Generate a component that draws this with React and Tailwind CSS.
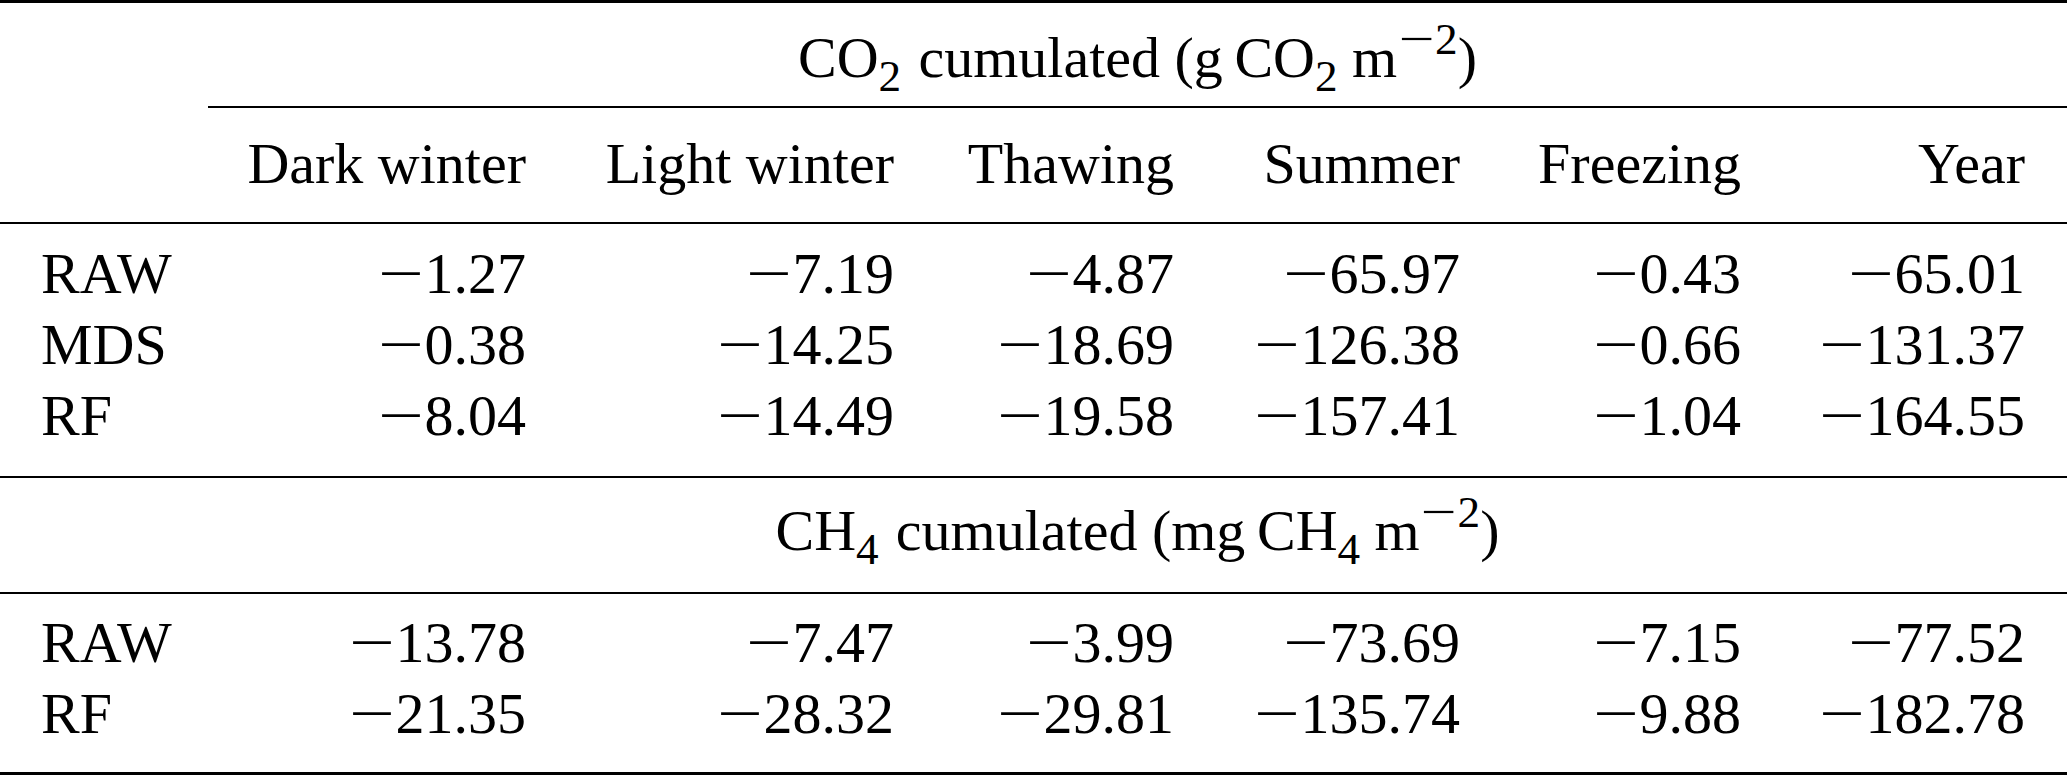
import React from "react";

const cols = ["Dark winter", "Light winter", "Thawing", "Summer", "Freezing", "Year"];

const co2Rows = [
  { name: "RAW", values: ["1.27", "7.19", "4.87", "65.97", "0.43", "65.01"] },
  { name: "MDS", values: ["0.38", "14.25", "18.69", "126.38", "0.66", "131.37"] },
  { name: "RF", values: ["8.04", "14.49", "19.58", "157.41", "1.04", "164.55"] },
];

const ch4Rows = [
  { name: "RAW", values: ["13.78", "7.47", "3.99", "73.69", "7.15", "77.52"] },
  { name: "RF", values: ["21.35", "28.32", "29.81", "135.74", "9.88", "182.78"] },
];

const grid = "grid grid-cols-[208px_360px_368px_280px_286px_281px_284px]";

// math minus is wider than the text one, so stretch the glyph a bit
const Minus = () => (
  <span className="inline-block w-[0.8em] text-left">
    <span className="inline-block origin-left scale-x-[1.4]">−</span>
  </span>
);

const Num = ({ v }) => (
  <span className="whitespace-nowrap">
    <Minus />
    {v}
  </span>
);

const Thin = () => <span className="inline-block w-[0.2em]" />;

const Sub = ({ children }) => (
  <sub className="text-[0.78em] bottom-[-0.32em] mr-[0.06em]">{children}</sub>
);

const GroupHeader = ({ gas, unit, className }) => (
  <div className={`${grid} ${className}`}>
    <div />
    <div className="col-span-6 text-center whitespace-nowrap">
      {gas.base}
      <Sub>{gas.sub}</Sub> cumulated ({unit}
      <Thin />
      {gas.base}
      <Sub>{gas.sub}</Sub>
      <Thin />m
      <sup className="text-[0.78em] top-[-0.5em] ml-[0.04em]">
        <Minus />2
      </sup>
      )
    </div>
  </div>
);

const DataRows = ({ rows, className }) => (
  <div className={className}>
    {rows.map((row, i) => (
      <div key={i} className={grid}>
        <div className="pl-[41px]">{row.name}</div>
        {row.values.map((v, j) => (
          <div key={j} className="text-right pr-[42px]">
            <Num v={v} />
          </div>
        ))}
      </div>
    ))}
  </div>
);

export default function App() {
  return (
    <div className="w-[2067px] h-[775px] bg-white text-black font-['Liberation_Serif','Times_New_Roman',serif] text-[58px] leading-[71px]">
      {/* toprule */}
      <div className="h-[3px] bg-black" />
      <GroupHeader gas={{ base: "CO", sub: "2" }} unit="g" className="pt-[19px] pb-[13px]" />
      {/* cmidrule */}
      <div className="ml-[208px] h-[2px] bg-black" />
      <div className={`${grid} pt-[20px] pb-[23px]`}>
        <div />
        {cols.map((c, i) => (
          <div key={i} className="text-right pr-[42px] whitespace-nowrap">
            {c}
          </div>
        ))}
      </div>
      <div className="h-[2px] bg-black" />
      <DataRows rows={co2Rows} className="pt-[14px] pb-[25px]" />
      <div className="h-[2px] bg-black" />
      <GroupHeader gas={{ base: "CH", sub: "4" }} unit="mg" className="pt-[17px] pb-[26px]" />
      <div className="h-[2px] bg-black" />
      <DataRows rows={ch4Rows} className="pt-[13px] pb-[23px]" />
      {/* bottomrule */}
      <div className="h-[3px] bg-black" />
    </div>
  );
}
